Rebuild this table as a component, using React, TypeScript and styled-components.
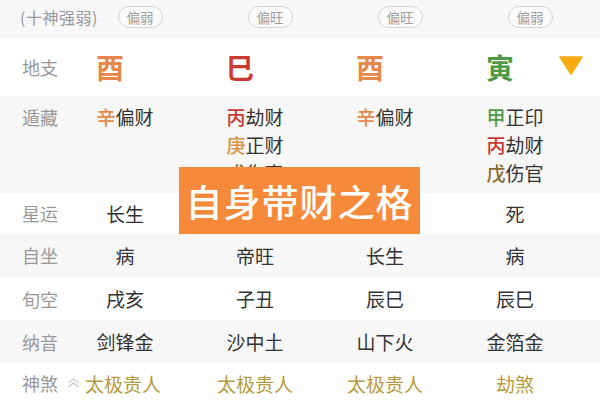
import React from "react";
import styled, { createGlobalStyle } from "styled-components";

const Global = createGlobalStyle`
  html, body { margin: 0; padding: 0; background: #fff; }
  body { font-family: "Noto Sans CJK SC", "Noto Sans", sans-serif; }
`;

const Page = styled.div`
  position: relative;
  width: 600px;
  height: 400px;
  overflow: hidden;
  background: #fff;
`;

const Row = styled.div<{ $h: number; $gray?: boolean; $align?: string }>`
  position: relative;
  display: grid;
  grid-template-columns: 60px repeat(4, 130px) 1fr;
  height: ${(p) => p.$h}px;
  background: ${(p) => (p.$gray ? "#f7f7f7" : "#fff")};
  align-items: ${(p) => p.$align || "center"};
  overflow: hidden;
`;

const Label = styled.div<{ $pt?: number }>`
  padding-left: 22px;
  padding-top: ${(p) => p.$pt || 0}px;
  font-size: 18px;
  color: #999;
  white-space: nowrap;
  line-height: 28px;
`;

const HeadLabel = styled.div`
  padding-left: 20px;
  font-size: 16px;
  color: #999;
  white-space: nowrap;
  letter-spacing: 0.5px;
  margin-top: -4px;
`;

const BadgeCell = styled.div`
  display: flex;
  justify-content: center;
  padding-left: 30px;
  margin-top: -4px;
`;

const Badge = styled.span`
  display: inline-flex;
  align-items: center;
  justify-content: center;
  width: 43px;
  height: 20px;
  border: 1px solid #d4d4d4;
  border-radius: 11px;
  font-size: 13.5px;
  color: #a0a0a0;
  background: #fafafa;
`;

const BigCell = styled.div`
  display: flex;
  justify-content: center;
  padding-right: 30px;
`;

const Big = styled.span<{ $c: string }>`
  font-size: 28px;
  font-weight: 700;
  color: ${(p) => p.$c};
  line-height: 1;
`;

const Triangle = styled.svg`
  position: absolute;
  right: 17px;
  top: 17px;
`;

const Cell = styled.div<{ $c?: string }>`
  display: flex;
  justify-content: center;
  align-items: center;
  font-size: 19px;
  color: ${(p) => p.$c || "#333"};
  white-space: nowrap;
`;

const StemCell = styled.div`
  display: flex;
  flex-direction: column;
  align-items: center;
  padding-top: 7px;
`;

const StemLine = styled.div`
  font-size: 19px;
  line-height: 28px;
  color: #333;
  white-space: nowrap;
`;

const Stem = styled.span<{ $c: string }>`
  color: ${(p) => p.$c};
  font-weight: 500;
`;

const ShenshaFirst = styled.div`
  display: flex;
  align-items: center;
  padding-left: 7px;
  gap: 5px;
  font-size: 19px;
  color: #b59c42;
  white-space: nowrap;
`;

const Banner = styled.div`
  position: absolute;
  left: 179px;
  top: 167px;
  width: 241px;
  height: 67px;
  background: #f78a3a;
  display: flex;
  align-items: center;
  justify-content: center;
  color: #fff;
  font-size: 37px;
  font-weight: 500;
  letter-spacing: 1px;
`;

const C = {
  orange: "#e5884a",
  red: "#c93a30",
  green: "#4f9a45",
  geng: "#d99445",
  wu: "#8c6a2e",
};

type StemItem = [string, string, string];

const stems: StemItem[][] = [
  [["辛", C.orange, "偏财"]],
  [
    ["丙", C.red, "劫财"],
    ["庚", C.geng, "正财"],
    ["戊", C.wu, "伤官"],
  ],
  [["辛", C.orange, "偏财"]],
  [
    ["甲", C.green, "正印"],
    ["丙", C.red, "劫财"],
    ["戊", C.wu, "伤官"],
  ],
];

const simpleRows: { label: string; h: number; gray: boolean; vals: string[] }[] = [
  { label: "星运", h: 40, gray: false, vals: ["长生", "", "", "死"] },
  { label: "自坐", h: 44, gray: true, vals: ["病", "帝旺", "长生", "病"] },
  { label: "旬空", h: 43, gray: false, vals: ["戌亥", "子丑", "辰巳", "辰巳"] },
  { label: "纳音", h: 43, gray: true, vals: ["剑锋金", "沙中土", "山下火", "金箔金"] },
];

export default function App() {
  return (
    <Page>
      <Global />
      <Row $h={38} $gray>
        <HeadLabel>(十神强弱)</HeadLabel>
        {["偏弱", "偏旺", "偏旺", "偏弱"].map((b, i) => (
          <BadgeCell key={i}>
            <Badge>{b}</Badge>
          </BadgeCell>
        ))}
      </Row>
      <Row $h={58}>
        <Label>地支</Label>
        <BigCell><Big $c={C.orange}>酉</Big></BigCell>
        <BigCell><Big $c={C.red}>巳</Big></BigCell>
        <BigCell><Big $c={C.orange}>酉</Big></BigCell>
        <BigCell><Big $c={C.green}>寅</Big></BigCell>
        <Triangle width="24" height="20" viewBox="0 0 24 20">
          <path d="M1 2 L23 2 L12 19 Z" fill="#f6ab12" strokeLinejoin="round" stroke="#f6ab12" strokeWidth="1.5" />
        </Triangle>
      </Row>
      <Row $h={97} $gray $align="start">
        <Label $pt={7}>遁藏</Label>
        {stems.map((col, i) => (
          <StemCell key={i}>
            {col.map(([s, c, t], j) => (
              <StemLine key={j}>
                <Stem $c={c}>{s}</Stem>
                {t}
              </StemLine>
            ))}
          </StemCell>
        ))}
      </Row>
      {simpleRows.map((r) => (
        <Row key={r.label} $h={r.h} $gray={r.gray}>
          <Label>{r.label}</Label>
          {r.vals.map((v, i) => (
            <Cell key={i}>{v}</Cell>
          ))}
        </Row>
      ))}
      <Row $h={40}>
        <Label>神煞</Label>
        <ShenshaFirst>
          <svg width="13" height="10" viewBox="0 0 13 10">
            <path d="M1.5 5 L6.5 1 L11.5 5 M1.5 9 L6.5 5 L11.5 9" fill="none" stroke="#c8c8c8" strokeWidth="1.2" />
          </svg>
          太极贵人
        </ShenshaFirst>
        <Cell $c="#b59c42">太极贵人</Cell>
        <Cell $c="#b59c42">太极贵人</Cell>
        <Cell $c="#b59c42">劫煞</Cell>
      </Row>
      <Banner>自身带财之格</Banner>
    </Page>
  );
}
